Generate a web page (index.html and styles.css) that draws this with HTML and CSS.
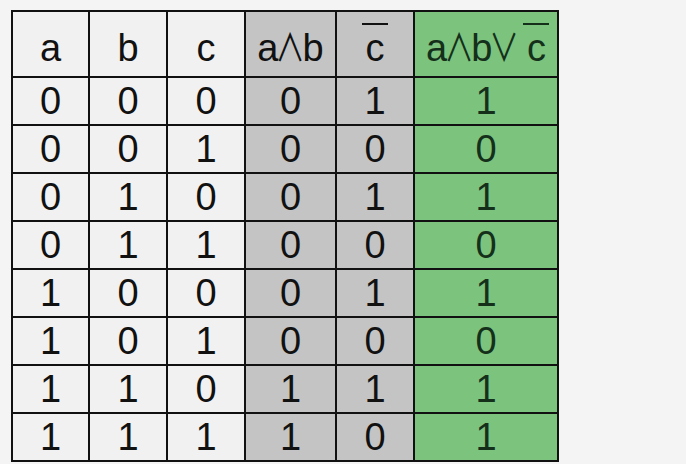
FILE: index.html
```html
<!DOCTYPE html>
<html lang="ru">
<head>
<meta charset="utf-8">
<title>Таблица истинности</title>
<link rel="stylesheet" href="styles.css">
</head>
<body>
<table class="truth">
  <colgroup>
    <col class="w-a"><col class="w-b"><col class="w-c"><col class="w-ab"><col class="w-nc"><col class="w-res">
  </colgroup>
  <thead>
    <tr>
      <th>a</th>
      <th>b</th>
      <th>c</th>
      <th class="gray">a<span class="op">∧</span>b</th>
      <th class="gray"><span class="bar">c</span></th>
      <th class="green">a<span class="op">∧</span>b<span class="op or">∨</span> <span class="bar">c</span></th>
    </tr>
  </thead>
  <tbody>
    <tr><td>0</td><td>0</td><td>0</td><td class="gray">0</td><td class="gray">1</td><td class="green">1</td></tr>
    <tr><td>0</td><td>0</td><td>1</td><td class="gray">0</td><td class="gray">0</td><td class="green">0</td></tr>
    <tr><td>0</td><td>1</td><td>0</td><td class="gray">0</td><td class="gray">1</td><td class="green">1</td></tr>
    <tr><td>0</td><td>1</td><td>1</td><td class="gray">0</td><td class="gray">0</td><td class="green">0</td></tr>
    <tr><td>1</td><td>0</td><td>0</td><td class="gray">0</td><td class="gray">1</td><td class="green">1</td></tr>
    <tr><td>1</td><td>0</td><td>1</td><td class="gray">0</td><td class="gray">0</td><td class="green">0</td></tr>
    <tr><td>1</td><td>1</td><td>0</td><td class="gray">1</td><td class="gray">1</td><td class="green">1</td></tr>
    <tr><td>1</td><td>1</td><td>1</td><td class="gray">1</td><td class="gray">0</td><td class="green">1</td></tr>
  </tbody>
</table>
</body>
</html>
```
FILE: styles.css
```css
html, body {
  margin: 0;
  padding: 0;
  background: #f4f4f4;
}

body {
  padding: 10px 0 0 11px;
  font-family: "Liberation Sans", Arial, sans-serif;
}

.truth {
  border-collapse: separate;
  border-spacing: 2px;
  background: #111;
  table-layout: fixed;
  width: 548px;
}

.w-a { width: 75px; }
.w-b { width: 76px; }
.w-c { width: 76px; }
.w-ab { width: 89px; }
.w-nc { width: 76px; }
.w-res { width: 142px; }

.truth th,
.truth td {
  padding: 0;
  text-align: center;
  font-size: 38px;
  font-weight: normal;
  color: #111;
  background: #f1f1f1;
  line-height: 44px;
  white-space: nowrap;
  overflow: hidden;
}

.truth th {
  height: 64px;
  vertical-align: bottom;
  padding-bottom: 6px;
  box-sizing: border-box;
}

.truth td {
  height: 46px;
  vertical-align: middle;
}

.truth .gray {
  background: #c4c4c4;
}

.truth .green {
  background: #7cc37e;
  color: #15301a;
}

.op {
  display: inline-block;
  font-family: "Noto Sans CJK JP", "DejaVu Sans", sans-serif;
  font-size: 38px;
  font-weight: 400;
  line-height: 44px;
  margin: 0 -7px;
  transform: scaleX(0.78);
}

.bar {
  position: relative;
  display: inline-block;
}

.bar::before {
  content: "";
  position: absolute;
  left: 50%;
  top: -3px;
  width: 26px;
  height: 2px;
  margin-left: -13px;
  background: currentColor;
}
```
